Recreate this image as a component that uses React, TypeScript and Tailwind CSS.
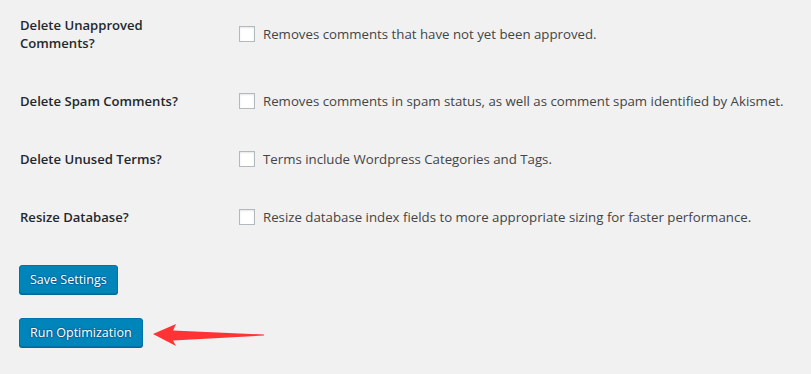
import React from "react";

const rows = [
  { label: ["Delete Unapproved", "Comments?"], desc: "Removes comments that have not yet been approved." },
  { label: ["Delete Spam Comments?"], desc: "Removes comments in spam status, as well as comment spam identified by Akismet." },
  { label: ["Delete Unused Terms?"], desc: "Terms include Wordpress Categories and Tags." },
  { label: ["Resize Database?"], desc: "Resize database index fields to more appropriate sizing for faster performance." },
];

export default function App() {
  return (
    <div className="relative w-[811px] h-[374px] bg-[#f1f1f1] overflow-hidden" style={{ fontFamily: '"Open Sans", "Noto Sans", sans-serif' }}>
      <div className="pl-5">
        {rows.map((r, i) => (
          <div key={i} className={`flex items-center ${i === 0 ? "pt-4" : "pt-5"} pb-5`}>
            <div className="w-[219px] text-[13.1px] leading-[18px] font-semibold text-[#23282d]">
              {r.label.map((l, j) => (
                <div key={j}>{l}</div>
              ))}
            </div>
            <div className="flex items-center">
              <span className="w-4 h-4 bg-white border border-[#b4b9be] shadow-[inset_0_1px_2px_rgba(0,0,0,0.1)] shrink-0" />
              <span className="ml-2 whitespace-nowrap text-[13.25px] leading-[18px] text-[#444]">{r.desc}</span>
            </div>
          </div>
        ))}
        <div className="pt-[19px] flex flex-col items-start gap-6 -ml-px">
          <button className="h-[29px] px-[10px] bg-[#0085ba] border border-[#0073aa] rounded-[3px] shadow-[0_1px_0_#006799] text-white text-[12.5px] leading-[26px] [text-shadow:0_-1px_1px_#006799,1px_0_1px_#006799,0_1px_1px_#006799,-1px_0_1px_#006799]">
            Save Settings
          </button>
          <button className="h-[29px] px-[10px] bg-[#0085ba] border border-[#0073aa] rounded-[3px] shadow-[0_1px_0_#006799] text-white text-[12.5px] leading-[26px] [text-shadow:0_-1px_1px_#006799,1px_0_1px_#006799,0_1px_1px_#006799,-1px_0_1px_#006799]">
            Run Optimization
          </button>
        </div>
      </div>
      <svg className="absolute left-0 top-0 pointer-events-none" width="811" height="374">
        <polygon points="153,334 176,324 173,330.5 264,334.5 264,335.5 173,340.5 176,346" fill="#f33" />
      </svg>
    </div>
  );
}
